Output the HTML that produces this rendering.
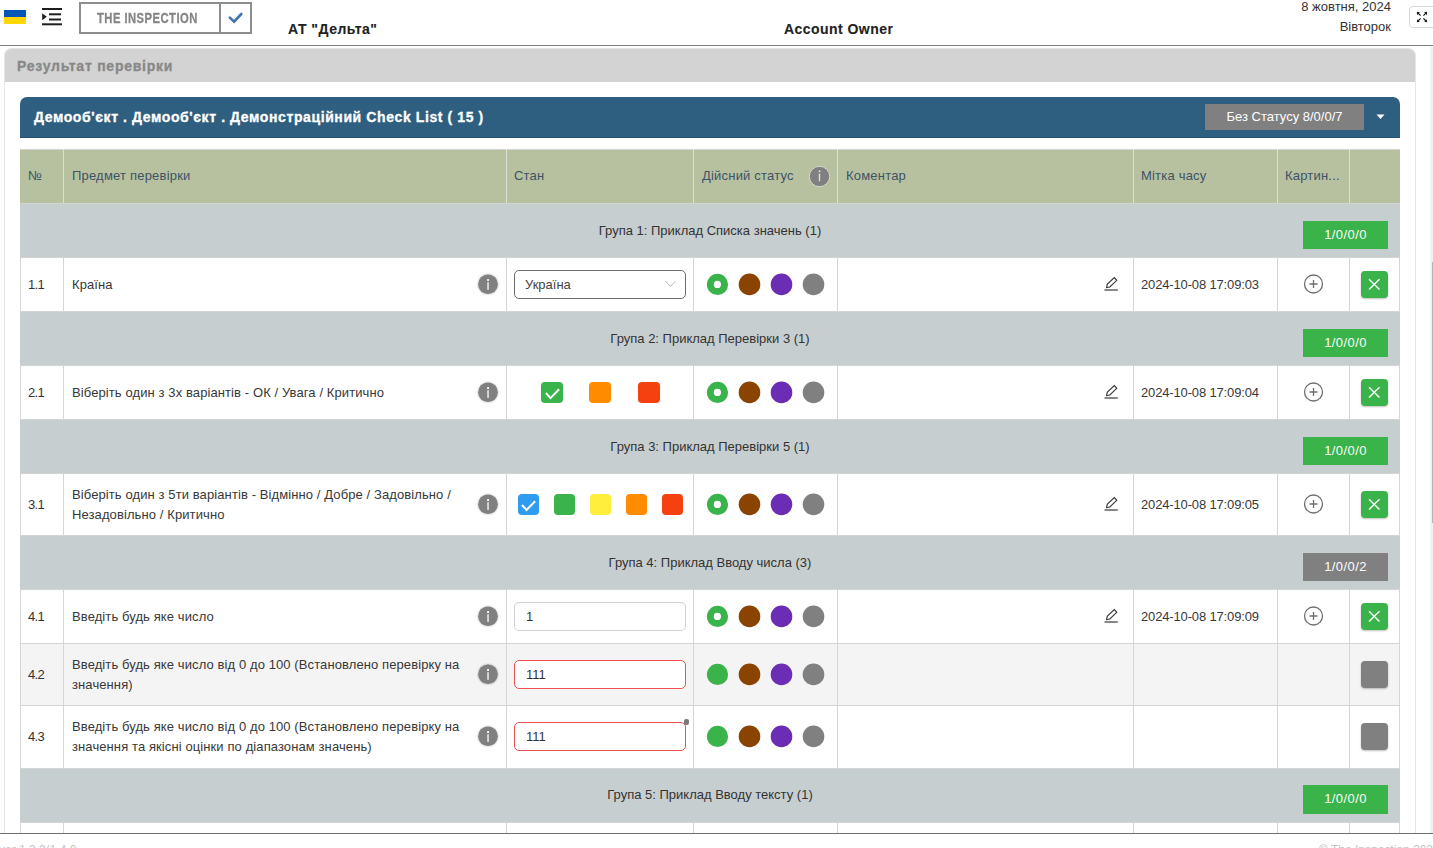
<!DOCTYPE html><html><head><meta charset="utf-8"><title>Inspection</title><style>
*{box-sizing:border-box;margin:0;padding:0}
html,body{width:1433px;height:848px;overflow:hidden;background:#fff}
body{position:relative;font-family:"Liberation Sans",sans-serif;color:#333;font-size:13px}
.a{position:absolute}
.t{position:absolute;white-space:nowrap;line-height:1}
.hdr{font-weight:700;color:#222;font-size:14px;-webkit-text-stroke:0.1px #222}
.hv{-webkit-text-stroke:0.3px currentColor}
.vl{position:absolute;width:1px;background:#d6d6d6}
.grp{position:absolute;left:20px;width:1380px;background:#c7cecf}
.grp .gt{position:absolute;left:0;width:1380px;text-align:center;top:0;color:#333;white-space:nowrap}
.badge{position:absolute;left:1283px;width:85px;height:28px;background:#39b34a;color:#fff;text-align:center;line-height:28px;font-size:13px}
.row{position:absolute;left:20px;width:1380px;background:#fff}
.info{position:absolute;width:20px;height:20px;border-radius:50%;background:#808080;box-shadow:0 0 1px 1px rgba(0,0,0,.12)}
.info:before{content:"";position:absolute;left:9px;top:4.2px;width:2px;height:2px;background:#fff;border-radius:0.5px}
.info:after{content:"";position:absolute;left:9.1px;top:7.5px;width:1.8px;height:7.5px;background:#e8e8e8}
.dot{position:absolute;width:22px;height:22px;border-radius:50%}
.cb{position:absolute;width:22px;height:21px;border-radius:4px}
.xbtn{position:absolute;width:27px;height:27px;border-radius:4px;background:#39b34a;box-shadow:0 1px 2px rgba(0,0,0,.25)}
.gbtn{position:absolute;width:27px;height:27px;border-radius:4px;background:#808080;box-shadow:0 1px 2px rgba(0,0,0,.25)}
.inp{position:absolute;left:494px;width:172px;height:28.5px;border-radius:5px;background:#fff}
</style></head><body><div class="a" style="left:4px;top:10px;width:22px;height:7px;background:#0057b8"></div>
<div class="a" style="left:4px;top:17px;width:22px;height:7px;background:#ffd700"></div>
<svg class="a" style="left:42px;top:7px" width="21" height="19" viewBox="0 0 21 19"><rect x="0" y="1" width="20" height="2" fill="#1e1e1e"/><rect x="7" y="6.3" width="12" height="2" fill="#1e1e1e"/><rect x="7" y="11.5" width="12" height="2" fill="#1e1e1e"/><rect x="0" y="16.3" width="20" height="2" fill="#1e1e1e"/><path d="M0.2 6.3 L4.8 9.8 L0.2 13.3 Z" fill="#1e1e1e"/></svg>
<div class="a" style="left:79px;top:2px;width:173px;height:32px;border:2px solid #8e8e8e"></div>
<div class="a" style="left:219px;top:2px;width:2px;height:32px;background:#8e8e8e"></div>
<div class="t" style="left:97px;top:11px;font-weight:700;font-size:14.5px;color:#858585;-webkit-text-stroke:0.3px #858585;letter-spacing:0.6px;transform:scaleX(0.775);transform-origin:0 0">THE INSPECTION</div>
<svg class="a" style="left:226px;top:10px" width="18" height="16" viewBox="226 10 18 16"><path d="M229.8 17.6 L234.1 21.6 L241.3 14" fill="none" stroke="#3f74b0" stroke-width="2.6" stroke-linecap="round" stroke-linejoin="miter"/></svg>
<div class="t hdr" style="left:288px;top:22px;letter-spacing:0.5px">АТ "Дельта"</div>
<div class="t hdr" style="left:784px;top:22px;letter-spacing:0.45px">Account Owner</div>
<div class="t" style="right:42px;top:0px;color:#333;font-size:13px">8 жовтня, 2024</div>
<div class="t" style="right:42px;top:20px;color:#333;font-size:13px">Вівторок</div>
<div class="a" style="left:1409px;top:6px;width:30px;height:22px;border:1px solid #d8d8d8;border-radius:4px;background:#fff"></div>
<svg class="a" style="left:1409px;top:6px" width="24" height="22" viewBox="0 0 24 22" fill="#1a1a1a" stroke="#1a1a1a" stroke-width="1.1"><path d="M7.8 5.8 L10.8 6.2 L8.2 9.2 Z" stroke="none"/><path d="M9 7 L11.6 9.6" fill="none"/><path d="M18.2 5.8 L15.2 6.2 L17.8 9.2 Z" stroke="none"/><path d="M17 7 L14.4 9.6" fill="none"/><path d="M7.8 16.2 L8.2 13.2 L10.8 15.8 Z" stroke="none"/><path d="M9 15 L11.6 12.4" fill="none"/><path d="M18.2 16.2 L17.8 13.2 L15.2 15.8 Z" stroke="none"/><path d="M17 15 L14.4 12.4" fill="none"/></svg>
<div class="a" style="left:0;top:45px;width:1433px;height:1px;background:#7c7c7c"></div>
<div class="a" style="left:1430px;top:47px;width:3px;height:786px;background:#f1f1f1"></div>
<div class="a" style="left:1432px;top:262px;width:1px;height:261px;background:#b5b5b5"></div>
<div class="a" style="left:4px;top:48px;width:1412px;height:800px;border:1px solid #e6e6e6;border-radius:7px 7px 0 0;background:#fff"></div>
<div class="a" style="left:5px;top:49px;width:1410px;height:33px;background:#d3d3d3;border-radius:6px 6px 0 0"></div>
<div class="t" style="left:17px;top:59px;font-weight:700;font-size:14px;color:#888;letter-spacing:0.75px;-webkit-text-stroke:0.3px #888">Результат перевірки</div>
<div class="a" style="left:20px;top:97px;width:1380px;height:41px;background:#2f5f80;border-radius:7px 7px 0 0"></div>
<div class="a" style="left:20px;top:137px;width:1380px;height:1px;background:#215276"></div>
<div class="t" style="left:34px;top:110px;font-weight:700;font-size:14px;color:#fff;letter-spacing:0.6px;-webkit-text-stroke:0.3px #fff">Демооб'єкт . Демооб'єкт . Демонстраційний Check List ( 15 )</div>
<div class="a" style="left:1205px;top:104px;width:159px;height:26px;background:#808080"></div>
<div class="t" style="left:1205px;top:110px;width:159px;text-align:center;color:#fff;font-size:13px">Без Статусу 8/0/0/7</div>
<svg class="a" style="left:1376px;top:114px" width="9" height="6" viewBox="0 0 9 6"><path d="M0.5 0.5 L8.5 0.5 L4.5 5 Z" fill="#fff"/></svg>
<div class="a" style="left:20px;top:149px;width:1380px;height:54px;background:#b7c19f"></div>
<div class="a" style="left:20px;top:149px;width:1380px;height:1px;background:#d4d4d4"></div>
<div class="vl" style="left:63px;top:149px;height:54px;background:#dcdfd2"></div>
<div class="vl" style="left:506px;top:149px;height:54px;background:#dcdfd2"></div>
<div class="vl" style="left:693px;top:149px;height:54px;background:#dcdfd2"></div>
<div class="vl" style="left:837px;top:149px;height:54px;background:#dcdfd2"></div>
<div class="vl" style="left:1133px;top:149px;height:54px;background:#dcdfd2"></div>
<div class="vl" style="left:1277px;top:149px;height:54px;background:#dcdfd2"></div>
<div class="vl" style="left:1349px;top:149px;height:54px;background:#dcdfd2"></div>
<div class="t" style="left:28px;top:169px;color:#3d5368;font-size:13px;letter-spacing:0.2px">№</div>
<div class="t" style="left:72px;top:169px;color:#3d5368;font-size:13px;letter-spacing:0.2px">Предмет перевірки</div>
<div class="t" style="left:514px;top:169px;color:#3d5368;font-size:13px;letter-spacing:0.2px">Стан</div>
<div class="t" style="left:702px;top:169px;color:#3d5368;font-size:13px;letter-spacing:0.2px">Дійсний статус</div>
<div class="t" style="left:846px;top:169px;color:#3d5368;font-size:13px;letter-spacing:0.2px">Коментар</div>
<div class="t" style="left:1141px;top:169px;color:#3d5368;font-size:13px;letter-spacing:0.2px">Мітка часу</div>
<div class="t" style="left:1285px;top:169px;color:#3d5368;font-size:13px;letter-spacing:0.2px">Картин...</div>
<svg class="a" style="left:808px;top:165px" width="23" height="23" viewBox="0 0 23 23"><circle cx="11.5" cy="11.5" r="10.2" fill="#808080" stroke="#d6d9cc" stroke-width="1"/><rect x="10.8" y="5.5" width="1.5" height="1.6" fill="#eee"/><rect x="10.8" y="8.6" width="1.4" height="7.6" fill="#ddd"/></svg>
<div class="grp" style="top:204px;height:53px"></div>
<div class="a" style="left:20px;top:203px;width:1380px;height:1px;background:#d4d4d4"></div>
<div class="t" style="left:20px;width:1380px;text-align:center;top:224px;color:#333">Група 1: Приклад Списка значень (1)</div>
<div class="badge" style="left:1303px;top:221px;height:28px;background:#39b34a"></div>
<div class="t" style="left:1303px;width:85px;text-align:center;top:228px;color:#fff;letter-spacing:0.4px">1/0/0/0</div>
<div class="row" style="top:258px;height:53px;background:#fff"></div>
<div class="a" style="left:20px;top:257px;width:1380px;height:1px;background:#d4d4d4"></div>
<div class="vl" style="left:20px;top:258px;height:53px"></div><div class="vl" style="left:63px;top:258px;height:53px"></div><div class="vl" style="left:506px;top:258px;height:53px"></div><div class="vl" style="left:693px;top:258px;height:53px"></div><div class="vl" style="left:837px;top:258px;height:53px"></div><div class="vl" style="left:1133px;top:258px;height:53px"></div><div class="vl" style="left:1277px;top:258px;height:53px"></div><div class="vl" style="left:1349px;top:258px;height:53px"></div><div class="vl" style="left:1399px;top:258px;height:53px"></div>
<div class="t" style="left:28px;top:278px;color:#333;letter-spacing:-0.7px">1.1</div>
<div class="t" style="left:72px;top:278px;color:#383838;letter-spacing:0.1px">Країна</div>
<svg class="a" style="left:477px;top:273px;filter:drop-shadow(0 0 0.8px rgba(0,0,0,.35))" width="22" height="22" viewBox="0 0 22 22"><circle cx="11" cy="11.3" r="9.8" fill="#808080"/><rect x="10.1" y="6" width="1.9" height="2" fill="#f2f2f2"/><rect x="10.15" y="9.2" width="1.8" height="7.6" fill="#dcdcdc"/></svg>
<div class="inp" style="left:514px;top:270px;border:1px solid #6b6b6b"></div>
<div class="t" style="left:525px;top:278px;color:#444">Україна</div>
<svg class="a" style="left:665px;top:280px" width="11" height="8" viewBox="0 0 11 8"><path d="M0.5 1 L5.5 6.5 L10.5 1" fill="none" stroke="#b8b8b8" stroke-width="1"/></svg>
<svg class="a" style="left:705px;top:272px" width="24" height="24" viewBox="0 0 24 24"><circle cx="12.5" cy="12.4" r="10.6" fill="#39b34a"/></svg>
<svg class="a" style="left:737px;top:272px" width="24" height="24" viewBox="0 0 24 24"><circle cx="12.5" cy="12.4" r="10.8" fill="#8b4300"/></svg>
<svg class="a" style="left:769px;top:272px" width="24" height="24" viewBox="0 0 24 24"><circle cx="12.5" cy="12.4" r="10.8" fill="#6a2db3"/></svg>
<svg class="a" style="left:801px;top:272px" width="24" height="24" viewBox="0 0 24 24"><circle cx="12.5" cy="12.4" r="10.8" fill="#808080"/></svg>
<svg class="a" style="left:705px;top:272px" width="24" height="24" viewBox="0 0 24 24"><circle cx="12.4" cy="12.4" r="3.6" fill="#fff"/></svg>
<svg class="a" style="left:1103px;top:276px" width="16" height="16" viewBox="0 0 16 16" fill="none" stroke="#333" stroke-width="1.1"><path d="M3.6 11.5 L4.2 8.3 L11.3 1.6 L13.8 4.3 L6.8 11 Z" stroke-linejoin="miter"/><path d="M1.5 14 L14.8 14" stroke="#7a7a7a" stroke-width="1.8"/></svg>
<svg class="a" style="left:1303px;top:274px" width="21" height="21" viewBox="0 0 21 21" fill="none" stroke="#6e6e6e" stroke-width="1.3"><circle cx="10.5" cy="10" r="9"/><path d="M10.5 6 V14 M6.5 10 H14.5"/></svg>
<div class="xbtn" style="left:1361px;top:271px"></div>
<svg class="a" style="left:1361px;top:271px" width="27" height="27" viewBox="0 0 27 27" stroke="#fff" stroke-width="1.4"><path d="M8 8.2 L18.5 18.5 M18.5 8.2 L8 18.5"/></svg>
<div class="t" style="left:1141px;top:278px;color:#383838;letter-spacing:-0.15px">2024-10-08 17:09:03</div>
<div class="grp" style="top:312px;height:53px"></div>
<div class="a" style="left:20px;top:311px;width:1380px;height:1px;background:#d4d4d4"></div>
<div class="t" style="left:20px;width:1380px;text-align:center;top:332px;color:#333">Група 2: Приклад Перевірки 3 (1)</div>
<div class="badge" style="left:1303px;top:329px;height:28px;background:#39b34a"></div>
<div class="t" style="left:1303px;width:85px;text-align:center;top:336px;color:#fff;letter-spacing:0.4px">1/0/0/0</div>
<div class="row" style="top:366px;height:53px;background:#fff"></div>
<div class="a" style="left:20px;top:365px;width:1380px;height:1px;background:#d4d4d4"></div>
<div class="vl" style="left:20px;top:366px;height:53px"></div><div class="vl" style="left:63px;top:366px;height:53px"></div><div class="vl" style="left:506px;top:366px;height:53px"></div><div class="vl" style="left:693px;top:366px;height:53px"></div><div class="vl" style="left:837px;top:366px;height:53px"></div><div class="vl" style="left:1133px;top:366px;height:53px"></div><div class="vl" style="left:1277px;top:366px;height:53px"></div><div class="vl" style="left:1349px;top:366px;height:53px"></div><div class="vl" style="left:1399px;top:366px;height:53px"></div>
<div class="t" style="left:28px;top:386px;color:#333;letter-spacing:-0.7px">2.1</div>
<div class="t" style="left:72px;top:386px;color:#383838;letter-spacing:0.1px">Віберіть один з 3х варіантів - ОК / Увага / Критично</div>
<svg class="a" style="left:477px;top:381px;filter:drop-shadow(0 0 0.8px rgba(0,0,0,.35))" width="22" height="22" viewBox="0 0 22 22"><circle cx="11" cy="11.3" r="9.8" fill="#808080"/><rect x="10.1" y="6" width="1.9" height="2" fill="#f2f2f2"/><rect x="10.15" y="9.2" width="1.8" height="7.6" fill="#dcdcdc"/></svg>
<div class="cb" style="left:541px;top:382px;background:#39b34a"></div>
<svg class="a" style="left:541px;top:382px" width="22" height="21" viewBox="0 0 22 21"><path d="M4.9 11.0 L9.5 16.1 L18.1 7.3" fill="none" stroke="#fff" stroke-width="2"/></svg>
<div class="cb" style="left:589px;top:382px;background:#ff8c00"></div>
<div class="cb" style="left:637.5px;top:382px;background:#f4410f"></div>
<svg class="a" style="left:705px;top:380px" width="24" height="24" viewBox="0 0 24 24"><circle cx="12.5" cy="12.4" r="10.6" fill="#39b34a"/></svg>
<svg class="a" style="left:737px;top:380px" width="24" height="24" viewBox="0 0 24 24"><circle cx="12.5" cy="12.4" r="10.8" fill="#8b4300"/></svg>
<svg class="a" style="left:769px;top:380px" width="24" height="24" viewBox="0 0 24 24"><circle cx="12.5" cy="12.4" r="10.8" fill="#6a2db3"/></svg>
<svg class="a" style="left:801px;top:380px" width="24" height="24" viewBox="0 0 24 24"><circle cx="12.5" cy="12.4" r="10.8" fill="#808080"/></svg>
<svg class="a" style="left:705px;top:380px" width="24" height="24" viewBox="0 0 24 24"><circle cx="12.4" cy="12.4" r="3.6" fill="#fff"/></svg>
<svg class="a" style="left:1103px;top:384px" width="16" height="16" viewBox="0 0 16 16" fill="none" stroke="#333" stroke-width="1.1"><path d="M3.6 11.5 L4.2 8.3 L11.3 1.6 L13.8 4.3 L6.8 11 Z" stroke-linejoin="miter"/><path d="M1.5 14 L14.8 14" stroke="#7a7a7a" stroke-width="1.8"/></svg>
<svg class="a" style="left:1303px;top:382px" width="21" height="21" viewBox="0 0 21 21" fill="none" stroke="#6e6e6e" stroke-width="1.3"><circle cx="10.5" cy="10" r="9"/><path d="M10.5 6 V14 M6.5 10 H14.5"/></svg>
<div class="xbtn" style="left:1361px;top:379px"></div>
<svg class="a" style="left:1361px;top:379px" width="27" height="27" viewBox="0 0 27 27" stroke="#fff" stroke-width="1.4"><path d="M8 8.2 L18.5 18.5 M18.5 8.2 L8 18.5"/></svg>
<div class="t" style="left:1141px;top:386px;color:#383838;letter-spacing:-0.15px">2024-10-08 17:09:04</div>
<div class="grp" style="top:420px;height:53px"></div>
<div class="a" style="left:20px;top:419px;width:1380px;height:1px;background:#d4d4d4"></div>
<div class="t" style="left:20px;width:1380px;text-align:center;top:440px;color:#333">Група 3: Приклад Перевірки 5 (1)</div>
<div class="badge" style="left:1303px;top:437px;height:28px;background:#39b34a"></div>
<div class="t" style="left:1303px;width:85px;text-align:center;top:444px;color:#fff;letter-spacing:0.4px">1/0/0/0</div>
<div class="row" style="top:474px;height:61px;background:#fff"></div>
<div class="a" style="left:20px;top:473px;width:1380px;height:1px;background:#d4d4d4"></div>
<div class="vl" style="left:20px;top:474px;height:61px"></div><div class="vl" style="left:63px;top:474px;height:61px"></div><div class="vl" style="left:506px;top:474px;height:61px"></div><div class="vl" style="left:693px;top:474px;height:61px"></div><div class="vl" style="left:837px;top:474px;height:61px"></div><div class="vl" style="left:1133px;top:474px;height:61px"></div><div class="vl" style="left:1277px;top:474px;height:61px"></div><div class="vl" style="left:1349px;top:474px;height:61px"></div><div class="vl" style="left:1399px;top:474px;height:61px"></div>
<div class="t" style="left:28px;top:498px;color:#333;letter-spacing:-0.7px">3.1</div>
<div class="t" style="left:72px;top:488px;color:#383838;letter-spacing:0.1px">Віберіть один з 5ти варіантів - Відмінно / Добре / Задовільно /</div>
<div class="t" style="left:72px;top:508px;color:#383838;letter-spacing:0.1px">Незадовільно / Критично</div>
<svg class="a" style="left:477px;top:493px;filter:drop-shadow(0 0 0.8px rgba(0,0,0,.35))" width="22" height="22" viewBox="0 0 22 22"><circle cx="11" cy="11.3" r="9.8" fill="#808080"/><rect x="10.1" y="6" width="1.9" height="2" fill="#f2f2f2"/><rect x="10.15" y="9.2" width="1.8" height="7.6" fill="#dcdcdc"/></svg>
<div class="cb" style="left:518.0px;top:494px;width:21px;background:#2f9cf0"></div>
<svg class="a" style="left:518.0px;top:494px" width="21" height="21" viewBox="0 0 21 21"><path d="M3.9 11.0 L8.5 16.0 L17.1 7.2" fill="none" stroke="#fff" stroke-width="2"/></svg>
<div class="cb" style="left:554.0px;top:494px;width:21px;background:#39b34a"></div>
<div class="cb" style="left:589.5px;top:494px;width:21px;background:#ffee3b"></div>
<div class="cb" style="left:625.5px;top:494px;width:21px;background:#ff8c00"></div>
<div class="cb" style="left:661.5px;top:494px;width:21px;background:#f4410f"></div>
<svg class="a" style="left:705px;top:492px" width="24" height="24" viewBox="0 0 24 24"><circle cx="12.5" cy="12.4" r="10.6" fill="#39b34a"/></svg>
<svg class="a" style="left:737px;top:492px" width="24" height="24" viewBox="0 0 24 24"><circle cx="12.5" cy="12.4" r="10.8" fill="#8b4300"/></svg>
<svg class="a" style="left:769px;top:492px" width="24" height="24" viewBox="0 0 24 24"><circle cx="12.5" cy="12.4" r="10.8" fill="#6a2db3"/></svg>
<svg class="a" style="left:801px;top:492px" width="24" height="24" viewBox="0 0 24 24"><circle cx="12.5" cy="12.4" r="10.8" fill="#808080"/></svg>
<svg class="a" style="left:705px;top:492px" width="24" height="24" viewBox="0 0 24 24"><circle cx="12.4" cy="12.4" r="3.6" fill="#fff"/></svg>
<svg class="a" style="left:1103px;top:496px" width="16" height="16" viewBox="0 0 16 16" fill="none" stroke="#333" stroke-width="1.1"><path d="M3.6 11.5 L4.2 8.3 L11.3 1.6 L13.8 4.3 L6.8 11 Z" stroke-linejoin="miter"/><path d="M1.5 14 L14.8 14" stroke="#7a7a7a" stroke-width="1.8"/></svg>
<svg class="a" style="left:1303px;top:494px" width="21" height="21" viewBox="0 0 21 21" fill="none" stroke="#6e6e6e" stroke-width="1.3"><circle cx="10.5" cy="10" r="9"/><path d="M10.5 6 V14 M6.5 10 H14.5"/></svg>
<div class="xbtn" style="left:1361px;top:491px"></div>
<svg class="a" style="left:1361px;top:491px" width="27" height="27" viewBox="0 0 27 27" stroke="#fff" stroke-width="1.4"><path d="M8 8.2 L18.5 18.5 M18.5 8.2 L8 18.5"/></svg>
<div class="t" style="left:1141px;top:498px;color:#383838;letter-spacing:-0.15px">2024-10-08 17:09:05</div>
<div class="grp" style="top:536px;height:53px"></div>
<div class="a" style="left:20px;top:535px;width:1380px;height:1px;background:#d4d4d4"></div>
<div class="t" style="left:20px;width:1380px;text-align:center;top:556px;color:#333">Група 4: Приклад Вводу числа (3)</div>
<div class="badge" style="left:1303px;top:553px;height:28px;background:#808080"></div>
<div class="t" style="left:1303px;width:85px;text-align:center;top:560px;color:#fff;letter-spacing:0.4px">1/0/0/2</div>
<div class="row" style="top:590px;height:53px;background:#fff"></div>
<div class="a" style="left:20px;top:589px;width:1380px;height:1px;background:#d4d4d4"></div>
<div class="vl" style="left:20px;top:590px;height:53px"></div><div class="vl" style="left:63px;top:590px;height:53px"></div><div class="vl" style="left:506px;top:590px;height:53px"></div><div class="vl" style="left:693px;top:590px;height:53px"></div><div class="vl" style="left:837px;top:590px;height:53px"></div><div class="vl" style="left:1133px;top:590px;height:53px"></div><div class="vl" style="left:1277px;top:590px;height:53px"></div><div class="vl" style="left:1349px;top:590px;height:53px"></div><div class="vl" style="left:1399px;top:590px;height:53px"></div>
<div class="t" style="left:28px;top:610px;color:#333;letter-spacing:-0.7px">4.1</div>
<div class="t" style="left:72px;top:610px;color:#383838;letter-spacing:0.1px">Введіть будь яке число</div>
<svg class="a" style="left:477px;top:605px;filter:drop-shadow(0 0 0.8px rgba(0,0,0,.35))" width="22" height="22" viewBox="0 0 22 22"><circle cx="11" cy="11.3" r="9.8" fill="#808080"/><rect x="10.1" y="6" width="1.9" height="2" fill="#f2f2f2"/><rect x="10.15" y="9.2" width="1.8" height="7.6" fill="#dcdcdc"/></svg>
<div class="inp" style="left:514px;top:602px;border:1px solid #d2d2d2"></div>
<div class="t" style="left:526px;top:610px;color:#333">1</div>
<svg class="a" style="left:705px;top:604px" width="24" height="24" viewBox="0 0 24 24"><circle cx="12.5" cy="12.4" r="10.6" fill="#39b34a"/></svg>
<svg class="a" style="left:737px;top:604px" width="24" height="24" viewBox="0 0 24 24"><circle cx="12.5" cy="12.4" r="10.8" fill="#8b4300"/></svg>
<svg class="a" style="left:769px;top:604px" width="24" height="24" viewBox="0 0 24 24"><circle cx="12.5" cy="12.4" r="10.8" fill="#6a2db3"/></svg>
<svg class="a" style="left:801px;top:604px" width="24" height="24" viewBox="0 0 24 24"><circle cx="12.5" cy="12.4" r="10.8" fill="#808080"/></svg>
<svg class="a" style="left:705px;top:604px" width="24" height="24" viewBox="0 0 24 24"><circle cx="12.4" cy="12.4" r="3.6" fill="#fff"/></svg>
<svg class="a" style="left:1103px;top:608px" width="16" height="16" viewBox="0 0 16 16" fill="none" stroke="#333" stroke-width="1.1"><path d="M3.6 11.5 L4.2 8.3 L11.3 1.6 L13.8 4.3 L6.8 11 Z" stroke-linejoin="miter"/><path d="M1.5 14 L14.8 14" stroke="#7a7a7a" stroke-width="1.8"/></svg>
<svg class="a" style="left:1303px;top:606px" width="21" height="21" viewBox="0 0 21 21" fill="none" stroke="#6e6e6e" stroke-width="1.3"><circle cx="10.5" cy="10" r="9"/><path d="M10.5 6 V14 M6.5 10 H14.5"/></svg>
<div class="xbtn" style="left:1361px;top:603px"></div>
<svg class="a" style="left:1361px;top:603px" width="27" height="27" viewBox="0 0 27 27" stroke="#fff" stroke-width="1.4"><path d="M8 8.2 L18.5 18.5 M18.5 8.2 L8 18.5"/></svg>
<div class="t" style="left:1141px;top:610px;color:#383838;letter-spacing:-0.15px">2024-10-08 17:09:09</div>
<div class="row" style="top:644px;height:61px;background:#f4f4f4"></div>
<div class="a" style="left:20px;top:643px;width:1380px;height:1px;background:#d4d4d4"></div>
<div class="vl" style="left:20px;top:644px;height:61px"></div><div class="vl" style="left:63px;top:644px;height:61px"></div><div class="vl" style="left:506px;top:644px;height:61px"></div><div class="vl" style="left:693px;top:644px;height:61px"></div><div class="vl" style="left:837px;top:644px;height:61px"></div><div class="vl" style="left:1133px;top:644px;height:61px"></div><div class="vl" style="left:1277px;top:644px;height:61px"></div><div class="vl" style="left:1349px;top:644px;height:61px"></div><div class="vl" style="left:1399px;top:644px;height:61px"></div>
<div class="t" style="left:28px;top:668px;color:#333;letter-spacing:-0.7px">4.2</div>
<div class="t" style="left:72px;top:658px;color:#383838;letter-spacing:0.1px">Введіть будь яке число від 0 до 100 (Встановлено перевірку на</div>
<div class="t" style="left:72px;top:678px;color:#383838;letter-spacing:0.1px">значення)</div>
<svg class="a" style="left:477px;top:663px;filter:drop-shadow(0 0 0.8px rgba(0,0,0,.35))" width="22" height="22" viewBox="0 0 22 22"><circle cx="11" cy="11.3" r="9.8" fill="#808080"/><rect x="10.1" y="6" width="1.9" height="2" fill="#f2f2f2"/><rect x="10.15" y="9.2" width="1.8" height="7.6" fill="#dcdcdc"/></svg>
<div class="inp" style="left:514px;top:660px;border:1.5px solid #f05050"></div>
<div class="t" style="left:526px;top:668px;color:#333">111</div>
<svg class="a" style="left:705px;top:662px" width="24" height="24" viewBox="0 0 24 24"><circle cx="12.5" cy="12.4" r="10.6" fill="#39b34a"/></svg>
<svg class="a" style="left:737px;top:662px" width="24" height="24" viewBox="0 0 24 24"><circle cx="12.5" cy="12.4" r="10.8" fill="#8b4300"/></svg>
<svg class="a" style="left:769px;top:662px" width="24" height="24" viewBox="0 0 24 24"><circle cx="12.5" cy="12.4" r="10.8" fill="#6a2db3"/></svg>
<svg class="a" style="left:801px;top:662px" width="24" height="24" viewBox="0 0 24 24"><circle cx="12.5" cy="12.4" r="10.8" fill="#808080"/></svg>
<div class="gbtn" style="left:1361px;top:661px"></div>
<div class="row" style="top:706px;height:62px;background:#fff"></div>
<div class="a" style="left:20px;top:705px;width:1380px;height:1px;background:#d4d4d4"></div>
<div class="vl" style="left:20px;top:706px;height:62px"></div><div class="vl" style="left:63px;top:706px;height:62px"></div><div class="vl" style="left:506px;top:706px;height:62px"></div><div class="vl" style="left:693px;top:706px;height:62px"></div><div class="vl" style="left:837px;top:706px;height:62px"></div><div class="vl" style="left:1133px;top:706px;height:62px"></div><div class="vl" style="left:1277px;top:706px;height:62px"></div><div class="vl" style="left:1349px;top:706px;height:62px"></div><div class="vl" style="left:1399px;top:706px;height:62px"></div>
<div class="t" style="left:28px;top:730px;color:#333;letter-spacing:-0.7px">4.3</div>
<div class="t" style="left:72px;top:720px;color:#383838;letter-spacing:0.1px">Введіть будь яке число від 0 до 100 (Встановлено перевірку на</div>
<div class="t" style="left:72px;top:740px;color:#383838;letter-spacing:0.1px">значення та якісні оцінки по діапазонам значень)</div>
<svg class="a" style="left:477px;top:725px;filter:drop-shadow(0 0 0.8px rgba(0,0,0,.35))" width="22" height="22" viewBox="0 0 22 22"><circle cx="11" cy="11.3" r="9.8" fill="#808080"/><rect x="10.1" y="6" width="1.9" height="2" fill="#f2f2f2"/><rect x="10.15" y="9.2" width="1.8" height="7.6" fill="#dcdcdc"/></svg>
<div class="inp" style="left:514px;top:722px;border:1.5px solid #f05050"></div>
<div class="t" style="left:526px;top:730px;color:#333">111</div>
<div class="a" style="left:684px;top:719px;width:5px;height:6px;border-radius:2px;background:#7a7a7a"></div>
<svg class="a" style="left:705px;top:724px" width="24" height="24" viewBox="0 0 24 24"><circle cx="12.5" cy="12.4" r="10.6" fill="#39b34a"/></svg>
<svg class="a" style="left:737px;top:724px" width="24" height="24" viewBox="0 0 24 24"><circle cx="12.5" cy="12.4" r="10.8" fill="#8b4300"/></svg>
<svg class="a" style="left:769px;top:724px" width="24" height="24" viewBox="0 0 24 24"><circle cx="12.5" cy="12.4" r="10.8" fill="#6a2db3"/></svg>
<svg class="a" style="left:801px;top:724px" width="24" height="24" viewBox="0 0 24 24"><circle cx="12.5" cy="12.4" r="10.8" fill="#808080"/></svg>
<div class="gbtn" style="left:1361px;top:723px"></div>
<div class="grp" style="top:769px;height:53px"></div>
<div class="a" style="left:20px;top:768px;width:1380px;height:1px;background:#d4d4d4"></div>
<div class="t" style="left:20px;width:1380px;text-align:center;top:788px;color:#333">Група 5: Приклад Вводу тексту (1)</div>
<div class="badge" style="left:1303px;top:785px;height:29px;background:#39b34a"></div>
<div class="t" style="left:1303px;width:85px;text-align:center;top:792px;color:#fff;letter-spacing:0.4px">1/0/0/0</div>
<div class="a" style="left:20px;top:822px;width:1380px;height:1px;background:#d4d4d4"></div>
<div class="vl" style="left:20px;top:823px;height:10px"></div><div class="vl" style="left:63px;top:823px;height:10px"></div><div class="vl" style="left:506px;top:823px;height:10px"></div><div class="vl" style="left:693px;top:823px;height:10px"></div><div class="vl" style="left:837px;top:823px;height:10px"></div><div class="vl" style="left:1133px;top:823px;height:10px"></div><div class="vl" style="left:1277px;top:823px;height:10px"></div><div class="vl" style="left:1349px;top:823px;height:10px"></div><div class="vl" style="left:1399px;top:823px;height:10px"></div>
<div class="a" style="left:0;top:833px;width:1433px;height:15px;background:#fff"></div>
<div class="a" style="left:0;top:833px;width:1433px;height:1px;background:#707070"></div>
<div class="t" style="left:-1px;top:844px;color:#c4c4c4;font-size:12px">ver 1.2.3(1.4.0</div>
<div class="t" style="left:1319px;top:844px;color:#c4c4c4;font-size:12px">© The Inspection 2024</div></body></html>
